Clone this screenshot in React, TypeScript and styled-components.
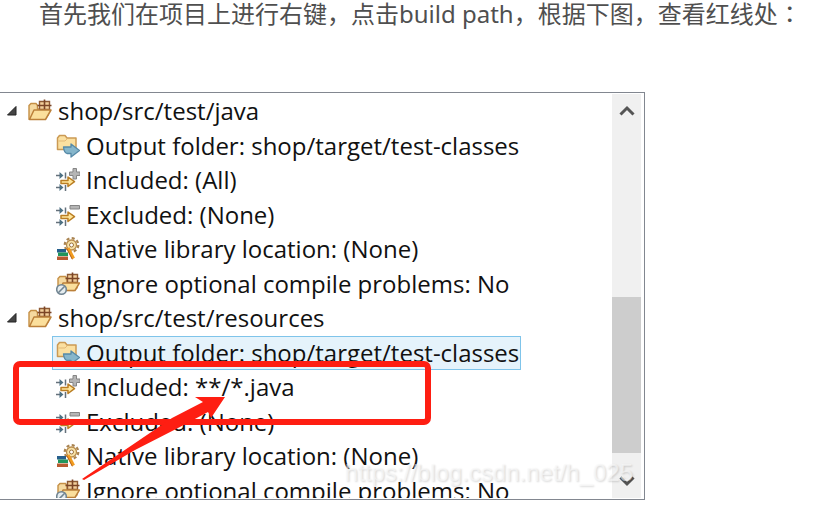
import React from 'react';
import styled, { createGlobalStyle } from 'styled-components';

const GlobalStyle = createGlobalStyle`
  * { box-sizing: border-box; }
  body { margin: 0; background: #fff; }
`;

const Article = styled.main`
  padding-bottom: 16px;
`;

const Intro = styled.p`
  margin: 0 0 65px;
  padding-left: 39px;
  font: 24px/26px 'Noto Sans', 'Noto Sans CJK SC', sans-serif;
  color: #4f4f4f;
`;

const CenteredMark = styled.span`
  font-family: 'Noto Sans CJK TC', sans-serif;
`;

const Figure = styled.figure`
  position: relative;
  margin: 0;
  max-width: 645px;
`;

const Panel = styled.div`
  display: flex;
  height: 408px;
  padding: 1px 3px 1px 0;
  border: 1px solid #828790;
  border-left: 0;
  background: #fff;
`;

const Tree = styled.ul`
  flex: 1;
  min-width: 0;
  margin: 0;
  padding: 0;
  list-style: none;
  overflow: hidden;
`;

const Group = styled.li`
  display: grid;
  grid-template-rows: repeat(6, 1fr);
  height: 207px;
`;

const RootRow = styled.div`
  display: flex;
  align-items: center;
  padding-left: 6px;
`;

const Toggle = styled.button`
  width: 12px;
  height: 12px;
  margin-right: 10px;
  padding: 0;
  border: 0;
  background: none;
  line-height: 0;
`;

const ChildRow = styled.div<{ $selected?: boolean }>`
  display: flex;
  align-items: center;
  justify-self: start;
  margin-left: 52px;
  padding: 0 1px 0 3px;
  border: 1px solid ${(p) => (p.$selected ? '#7fc4ea' : 'transparent')};
  background: ${(p) => (p.$selected ? '#e5f3fb' : 'transparent')};
`;

const Label = styled.span`
  margin-left: 6px;
  font: 24px/30px 'Open Sans', 'Noto Sans', sans-serif;
  white-space: nowrap;
  color: #111;
`;

const Icon = styled.svg`
  flex: none;
  width: 24px;
  height: 24px;
`;

const ScrollBar = styled.div`
  display: flex;
  flex-direction: column;
  flex: none;
  width: 29px;
  background: #f0f0f0;
`;

const ScrollButton = styled.button`
  height: 34px;
  padding: 0;
  border: 0;
  background: none;
  line-height: 0;
`;

const Track = styled.div`
  display: flex;
  flex-direction: column;
  justify-content: flex-end;
  flex: 1;
  padding-bottom: 11px;
`;

const Thumb = styled.div`
  height: 156px;
  background: #cdcdcd;
`;

const Watermark = styled.span`
  position: absolute;
  right: 12px;
  bottom: 13px;
  font: 24px/28px 'Liberation Sans', sans-serif;
  color: rgba(250, 250, 250, 0.6);
  text-shadow: 1px 1px 2px rgba(0, 0, 0, 0.16);
`;

const Markup = styled.svg`
  position: absolute;
  left: 0;
  top: 0;
  width: 645px;
  height: 408px;
  pointer-events: none;
`;

const PackageGrid = () => (
  <g>
    <path d="M11.500 2.500h10v8h-10z" fill="#f3cf9b" stroke="#8d5a35" strokeWidth="1.400" />
    <path d="M9.500 6.500h14M16.500 .5v10" stroke="#7b4526" strokeWidth="1.600" fill="none" />
  </g>
);

const SourceFolder = () => (
  <Icon viewBox="0 0 24 24" aria-hidden="true">
    <path d="M1 20V6.500L3 4.500h5l1.500 2V10H20v6l-3 4H2z" fill="#f5d9a0" stroke="#c58f45" strokeWidth="1.400" />
    <PackageGrid />
    <path d="M6 11h17L17.500 20.500H1.500z" fill="#fbdf9c" stroke="#bb803a" strokeWidth="1.500" strokeLinejoin="round" />
  </Icon>
);

const OutputFolder = () => (
  <Icon viewBox="0 0 24 24" aria-hidden="true">
    <path d="M1.500 15.500V4L3.500 1.500H9l2 2.500h9v11.500H2z" fill="#fbe0a0" stroke="#cb9a54" strokeWidth="1.500" strokeLinejoin="round" />
    <path d="M2.500 7h6.500l2-2" stroke="#e3b977" fill="none" />
    <path d="M7.500 13h7.500V10l8.500 6.500-8.500 6.500v-3.500h-4q-3-1-3.500-6.500z" fill="#86b6cb" stroke="#568aa8" strokeWidth="1.300" strokeLinejoin="round" />
  </Icon>
);

const Filter = ({ plus }: { plus?: boolean }) => (
  <Icon viewBox="0 0 24 24" aria-hidden="true">
    <path d="M0 7.500h5M0 19.500h5M9.500 4.500v6M9.500 17v6" stroke="#65717b" strokeWidth="1.500" />
    <path d="M3.500 4l4 3.500-4 3.500zM3.500 16l4 3.500-4 3.500z" fill="#4e7183" />
    <path d="M5 12.500h7V9l6.500 4.700-6.500 4.800V15.500H5z" fill="#ffe69a" stroke="#ba7e24" strokeWidth="1.500" strokeLinejoin="round" />
    {plus ? (
      <path d="M17 .5h3.500v3.500H24v3.500h-3.500V11h-3.500V7.500h-3.500V4H17z" fill="#b5b5b5" stroke="#858585" />
    ) : (
      <path d="M14 2.500h9.500v3.500H14z" fill="#b5b5b5" stroke="#858585" />
    )}
  </Icon>
);

const NativeLibrary = () => (
  <Icon viewBox="0 0 24 24" aria-hidden="true">
    <circle cx="15.500" cy="8" r="6.800" fill="none" stroke="#a98350" strokeWidth="2.200" strokeDasharray="3 2.340" />
    <circle cx="15.500" cy="8" r="5" fill="#f7e2a8" stroke="#b98d4d" strokeWidth="1.300" />
    <circle cx="15.500" cy="8" r="2" fill="#fff" stroke="#9b713c" />
    <path d="M1 12h9v3.500H1z" fill="#265f8c" />
    <path d="M2 15.500h10v3.500H2z" fill="#21955c" />
    <path d="M1 19.500h11V23H1z" fill="#b85a30" />
    <path d="M12 11l5.500 10.500" stroke="#f29c1f" strokeWidth="3.200" />
    <path d="M10.800 11.600l5.500 10.700" stroke="#b3601d" />
  </Icon>
);

const IgnoreProblems = () => (
  <Icon viewBox="0 0 24 24" aria-hidden="true">
    <path d="M2 18V6.500L4 4.500h5.500l1.500 2V10h10v6l-3 2.500z" fill="#f5d9a0" stroke="#c58f45" strokeWidth="1.400" />
    <PackageGrid />
    <path d="M7 11h16.500L19 18.500H4z" fill="#fbdf9c" stroke="#bb803a" strokeWidth="1.500" strokeLinejoin="round" />
    <circle cx="5.500" cy="17.500" r="4.800" fill="#e5ecef" stroke="#708491" strokeWidth="1.600" />
    <path d="M2.300 20.700l6.400-6.400" stroke="#708491" strokeWidth="1.600" />
  </Icon>
);

const Included = () => <Filter plus />;
const Excluded = () => <Filter />;

type Entry = { icon: React.ComponentType; text: string; selected?: boolean };

const entries = (included: string, selected: boolean): Entry[] => [
  { icon: OutputFolder, text: 'Output folder: shop/target/test-classes', selected },
  { icon: Included, text: `Included: ${included}` },
  { icon: Excluded, text: 'Excluded: (None)' },
  { icon: NativeLibrary, text: 'Native library location: (None)' },
  { icon: IgnoreProblems, text: 'Ignore optional compile problems: No' },
];

const groups = [
  { name: 'shop/src/test/java', items: entries('(All)', false) },
  { name: 'shop/src/test/resources', items: entries('**/*.java', true) },
];

export default function App() {
  return (
    <Article>
      <GlobalStyle />
      <Intro lang="zh-CN">
        首先我们在项目上进行右键，点击build path，根据下图，查看红线处<CenteredMark lang="zh-TW">：</CenteredMark>
      </Intro>
      <Figure>
        <Panel>
          <Tree>
            {groups.map((group) => (
              <Group key={group.name}>
                <RootRow>
                  <Toggle aria-label={`Collapse ${group.name}`}>
                    <svg width="12" height="12" viewBox="0 0 12 12">
                      <path d="M10 1.500V10H1.500z" fill="#444" stroke="#222" />
                    </svg>
                  </Toggle>
                  <SourceFolder />
                  <Label>{group.name}</Label>
                </RootRow>
                {group.items.map(({ icon: EntryIcon, text, selected }) => (
                  <ChildRow key={text} $selected={selected}>
                    <EntryIcon />
                    <Label>{text}</Label>
                  </ChildRow>
                ))}
              </Group>
            ))}
          </Tree>
          <ScrollBar>
            <ScrollButton aria-label="Scroll up">
              <svg width="16" height="12" viewBox="0 0 16 12">
                <path d="M1.500 9.500L8 3l6.500 6.500" fill="none" stroke="#555" strokeWidth="3" />
              </svg>
            </ScrollButton>
            <Track>
              <Thumb />
            </Track>
            <ScrollButton aria-label="Scroll down">
              <svg width="16" height="12" viewBox="0 0 16 12">
                <path d="M1.500 2.500L8 9l6.500-6.500" fill="none" stroke="#555" strokeWidth="3" />
              </svg>
            </ScrollButton>
          </ScrollBar>
        </Panel>
        <Watermark>https://blog.csdn.net/h_025</Watermark>
        <Markup viewBox="0 0 645 408" aria-hidden="true">
          <rect x="16" y="272" width="412" height="58" rx="4" fill="none" stroke="#fe1e12" strokeWidth="6" />
          <path d="M82 387L172 326L203 310L195 305H225L211 326L208 320L178 336L135 358L84 388z" fill="#fe1e12" />
        </Markup>
      </Figure>
    </Article>
  );
}
